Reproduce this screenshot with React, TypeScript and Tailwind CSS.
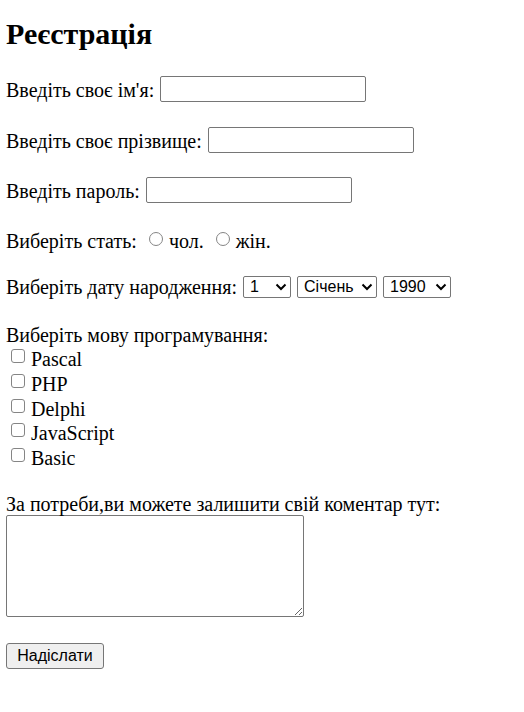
import React from "react";

const serif = "font-['Liberation_Serif','Times_New_Roman',serif]";
const sans = "font-['Liberation_Sans',Arial,sans-serif]";

function TextInput({ type = "text" }: { type?: string }) {
  return (
    <input
      type={type}
      className="block w-[206px] h-[26px] border border-[#767676] rounded-[2px] bg-white px-[2px] outline-none shrink-0"
    />
  );
}

function Chevron() {
  return (
    <svg width="12" height="8" viewBox="0 0 12 8" className="pointer-events-none absolute top-[7px]" style={{ right: 4 }}>
      <path d="M1.5 1.5 L6 6 L10.5 1.5" fill="none" stroke="#000" strokeWidth="2" />
    </svg>
  );
}

function Select({ width, options }: { width: string; options: string[] }) {
  return (
    <div className={`relative ${width} h-[22px] shrink-0`}>
      <select
        className={`block appearance-none w-full h-full border border-[#767676] rounded-[2px] bg-white pl-[6px] text-[16px] leading-[20px] text-black ${sans} outline-none`}
      >
        {options.map((o) => (
          <option key={o}>{o}</option>
        ))}
      </select>
      <Chevron />
    </div>
  );
}

function Check({ label }: { label: string }) {
  return (
    <label className="flex items-start h-[24.75px]">
      <span className="mt-[3px] ml-[5px] w-[14px] h-[14px] border border-[#858585] rounded-[3px] bg-white shrink-0" />
      <span className="ml-[6px] mt-[2px] leading-[22px]">{label}</span>
    </label>
  );
}

function Radio({ label }: { label: string }) {
  return (
    <label className="flex items-start">
      <span className="mt-[4px] ml-[12px] w-[14px] h-[14px] border border-[#858585] rounded-full bg-white shrink-0" />
      <span className="ml-[6px] mt-[2px] leading-[22px]">{label}</span>
    </label>
  );
}

export default function App() {
  const days = Array.from({ length: 31 }, (_, i) => String(i + 1));
  const months = ["Січень", "Лютий", "Березень", "Квітень", "Травень", "Червень", "Липень", "Серпень", "Вересень", "Жовтень", "Листопад", "Грудень"];
  const years = ["1990", "1991", "1992", "1993", "1994", "1995"];

  return (
    <div className={`min-h-[712px] bg-white text-black pl-[6px] text-[20px] leading-[22px] ${serif}`}>
      <h1 className="pt-[16px] h-[51px] text-[30px] leading-[36px] font-bold">Реєстрація</h1>

      <div className="flex items-start gap-[6px] mt-[25px] h-[26px]">
        <span className="mt-[3px] leading-[22px]">Введіть своє ім'я:</span>
        <TextInput />
      </div>

      <div className="flex items-start gap-[6px] mt-[25px] h-[26px]">
        <span className="mt-[3px] leading-[22px]">Введіть своє прізвище:</span>
        <TextInput />
      </div>

      <div className="flex items-start gap-[6px] mt-[24px] h-[26px]">
        <span className="mt-[3px] leading-[22px]">Введіть пароль:</span>
        <TextInput type="password" />
      </div>

      <div className="flex items-start mt-[25px] h-[22px]">
        <span className="mt-[2px] leading-[22px]">Виберіть стать:</span>
        <Radio label="чол." />
        <Radio label="жін." />
      </div>

      <div className="flex items-start gap-[6px] mt-[26px] h-[22px]">
        <span className="leading-[22px]">Виберіть дату народження:</span>
        <Select width="w-[48px]" options={days} />
        <Select width="w-[80px]" options={months} />
        <Select width="w-[68px]" options={years} />
      </div>

      <div className="mt-[26px] leading-[22px]">Виберіть мову програмування:</div>
      <div className="flex flex-col">
        <Check label="Pascal" />
        <Check label="PHP" />
        <Check label="Delphi" />
        <Check label="JavaScript" />
        <Check label="Basic" />
      </div>

      <div className="mt-[23px] leading-[22px]">За потреби,ви можете залишити свій коментар тут:</div>
      <textarea className="block w-[298px] h-[102px] border border-[#767676] rounded-[2px] bg-white outline-none" />

      <button
        className={`block mt-[26px] w-[98px] h-[26px] bg-[#efefef] border border-[#767676] rounded-[3px] text-[16px] text-black ${sans}`}
      >
        Надіслати
      </button>
    </div>
  );
}
